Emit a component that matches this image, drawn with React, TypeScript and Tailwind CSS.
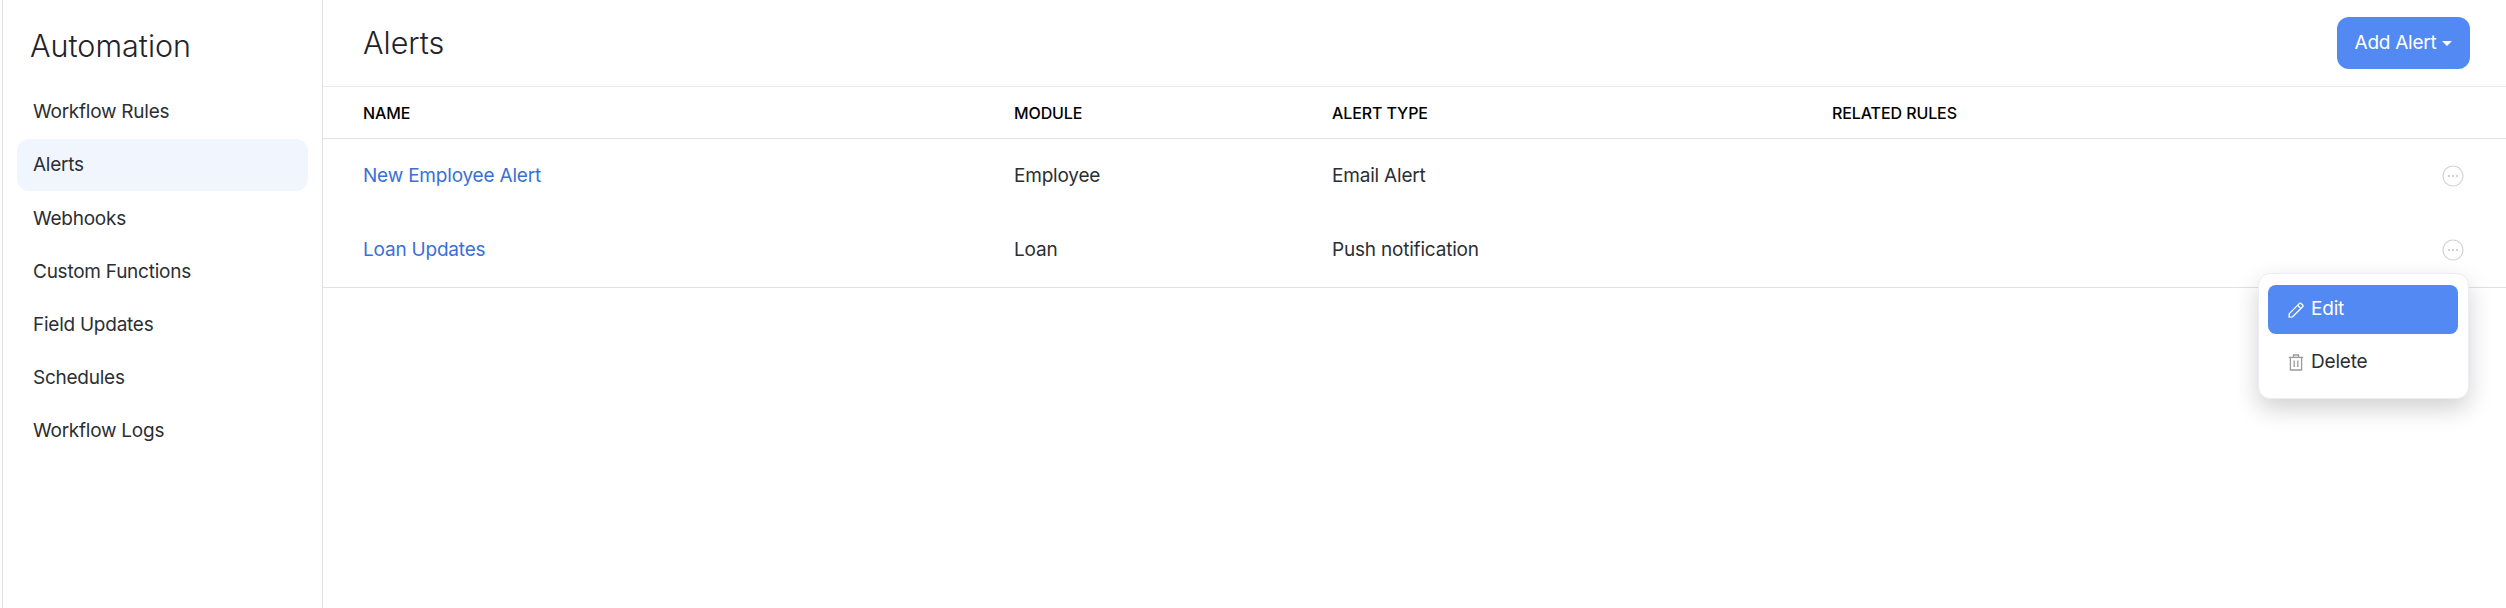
import React from "react";

const sideItems = [
  "Workflow Rules",
  "Alerts",
  "Webhooks",
  "Custom Functions",
  "Field Updates",
  "Schedules",
  "Workflow Logs",
];

const rows = [
  { name: "New Employee Alert", module: "Employee", type: "Email Alert" },
  { name: "Loan Updates", module: "Loan", type: "Push notification" },
];

function DotsIcon() {
  return (
    <svg width="22" height="22" viewBox="0 0 22 22" fill="none">
      <circle cx="11" cy="11" r="10" stroke="#d4d4d4" strokeWidth="1.2" />
      <circle cx="7" cy="11" r="1" fill="#c4c4c4" />
      <circle cx="11" cy="11" r="1" fill="#c4c4c4" />
      <circle cx="15" cy="11" r="1" fill="#c4c4c4" />
    </svg>
  );
}

function PencilIcon() {
  return (
    <svg width="16" height="16" viewBox="0 0 16 16" fill="none" stroke="#ffffff" strokeWidth="1.3" strokeLinejoin="round">
      <path d="M1 15.2 L1.3 11.6 L11.3 1.6 Q12.2 0.8 13.1 1.6 L14.6 3 Q15.4 3.9 14.6 4.8 L4.6 14.8 Z" />
      <path d="M9.6 3.3 L12.9 6.6" />
    </svg>
  );
}

function TrashIcon() {
  return (
    <svg width="16" height="17" viewBox="0 0 16 17" fill="none" stroke="#9a9a9a" strokeWidth="1.3">
      <path d="M0.8 3.4 H15.2" />
      <path d="M5.5 3.4 V1 H10.5 V3.4" />
      <path d="M2.4 3.4 V16 H13.6 V3.4" />
      <path d="M6.2 6.5 V13" />
      <path d="M9.8 6.5 V13" />
    </svg>
  );
}

export default function App() {
  return (
    <div className="relative flex h-[608px] w-[2506px] overflow-hidden bg-white pl-[2px] font-['Inter',sans-serif] text-[#2b2f33]">
      {/* Sidebar */}
      <div className="w-[321px] shrink-0 border-x border-[#e2e2e2] px-[14px]">
        <h2 className="pl-[13px] pt-[26px] text-[30.5px] font-light leading-[40px] text-[#1f2328]">Automation</h2>
        <nav className="mt-[20px] flex flex-col gap-[1.2px]">
          {sideItems.map((item) => (
            <div
              key={item}
              className={`flex h-[52px] items-center rounded-xl pl-4 pt-[1px] text-[19px] tracking-[-0.25px] ${item === "Alerts" ? "bg-[#f1f6fe]" : ""}`}
            >
              {item}
            </div>
          ))}
        </nav>
      </div>

      {/* Main */}
      <div className="relative min-w-0 flex-1">
        <div className="flex h-[87px] items-start justify-between border-b border-[#ebebeb] pl-[40px] pr-9 pt-[17px]">
          <h1 className="text-[30.5px] font-light leading-[52px] text-[#1f2328]">Alerts</h1>
          <button className="flex h-[52px] w-[133px] items-center justify-center gap-[6px] rounded-xl bg-[#5289f2] text-[19px] tracking-[-0.25px] text-white">
            Add Alert
            <span className="mt-[1px] h-0 w-0 border-x-[5px] border-t-[5px] border-x-transparent border-t-white" />
          </button>
        </div>

        <div className="grid h-[52px] grid-cols-[651px_318px_500px_1fr] items-center border-b border-[#e2e2e2] pl-[40px] text-[16px] font-medium tracking-[-0.1px] text-black">
          <div>NAME</div>
          <div>MODULE</div>
          <div>ALERT TYPE</div>
          <div>RELATED RULES</div>
        </div>

        <div className="border-b border-[#e2e2e2]">
          {rows.map((row) => (
            <div key={row.name} className="grid h-[74px] grid-cols-[651px_318px_500px_1fr_auto] items-center pl-[40px] pr-[42px] text-[19px] tracking-[-0.2px]">
              <div className="text-[#3a6fd6]">{row.name}</div>
              <div>{row.module}</div>
              <div>{row.type}</div>
              <div />
              <DotsIcon />
            </div>
          ))}
        </div>

        {/* Row action menu */}
        <div className="absolute left-[1935px] top-[273px] w-[211px] rounded-xl border border-[#ececf2] bg-white pb-[10px] pl-[9px] pr-[10px] pt-[11px] shadow-[0_10px_24px_rgba(0,0,0,0.18)]">
          <div className="flex h-[49px] items-center gap-[7px] rounded-lg bg-[#5289f2] pl-5 text-[19px] tracking-[-0.2px] text-white">
            <PencilIcon />
            Edit
          </div>
          <div className="mt-[2px] flex h-[52px] items-center gap-[7px] pl-5 text-[19px] tracking-[-0.2px]">
            <TrashIcon />
            Delete
          </div>
        </div>
      </div>
    </div>
  );
}
